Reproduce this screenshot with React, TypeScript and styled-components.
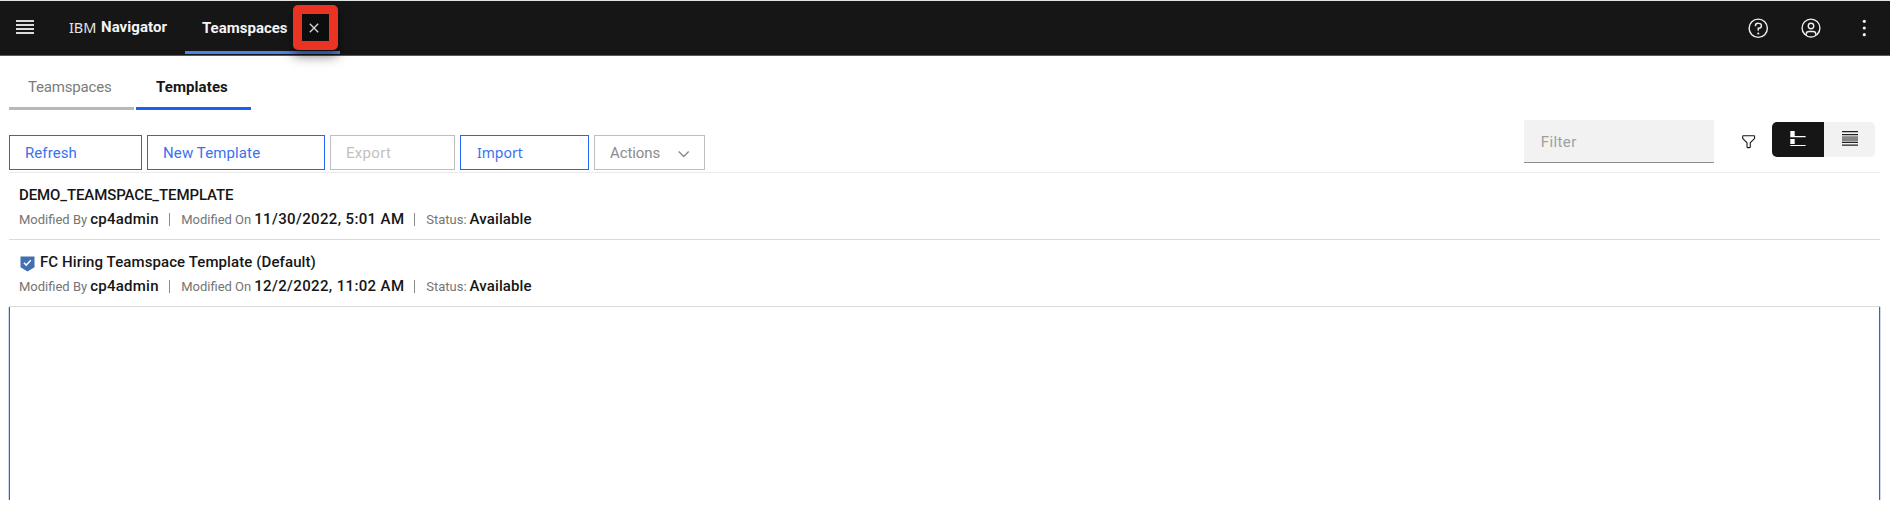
import React from 'react';
import styled, { createGlobalStyle } from 'styled-components';

const GlobalStyle = createGlobalStyle`
  *, *::before, *::after { box-sizing: border-box; }
  body { margin: 0; background: #fff; color: #161616; font: 400 15px/20px Roboto, sans-serif; }
  button { margin: 0; padding: 0; border: 0; background: none; font: inherit; color: inherit; text-align: left; }
  svg { display: block; }
`;

const Page = styled.div`
  display: flex;
  flex-direction: column;
  height: 506px;
  overflow: hidden;
`;

const Header = styled.header`
  display: flex;
  align-items: stretch;
  height: 56px;
  background: #161616;
  border-top: 1px solid #dfe5e3;
  border-bottom: 1px solid #5a5a5a;
  color: #f4f4f4;
`;

const MenuButton = styled.button`
  display: flex;
  align-items: flex-start;
  padding: 19px 0 0 16px;
  width: 69px;
`;

const Brand = styled.div`
  display: flex;
  width: 116px;
  padding-top: 16px;
`;

const BrandPrefix = styled.span`
  width: 32px;
  font-family: 'Noto Sans', sans-serif;
  font-size: 14.5px;
  letter-spacing: -0.1px;
  color: #e4e4e4;
`;

const BrandName = styled.span`
  font-weight: 700;
  letter-spacing: 0.05px;
`;

const HeaderTab = styled.div`
  display: flex;
  width: 155px;
  padding: 17px 0 0 17px;
  font-weight: 700;
  background: linear-gradient(#4f83ea, #4f83ea) 0 50px / 100% 3px no-repeat;
`;

const CloseFrame = styled.button`
  position: relative;
  z-index: 1;
  display: flex;
  align-items: center;
  justify-content: center;
  width: 45px;
  height: 45px;
  margin: -13px 0 0 5px;
  padding-right: 2px;
  border: 9px solid #ea3323;
  border-radius: 5px;
  background: #0d0d0d;
  box-shadow: 0 6px 12px rgba(0, 0, 0, 0.5);
  flex: none;
`;

const HeaderActions = styled.div`
  display: flex;
  align-items: center;
  gap: 31px;
  margin-left: auto;
  padding-right: 15px;
`;

const Tabs = styled.nav`
  display: flex;
  gap: 2px;
  height: 54px;
  padding: 0 9px;
`;

const Tab = styled.button<{ $selected?: boolean; $width: number }>`
  display: flex;
  width: ${p => p.$width}px;
  padding: 21px 0 0 ${p => (p.$selected ? 20 : 19)}px;
  border-bottom: 3px solid ${p => (p.$selected ? '#1c5fef' : '#b8b8b8')};
  color: ${p => (p.$selected ? '#161616' : '#7b7b7b')};
  font-weight: ${p => (p.$selected ? 700 : 400)};
  letter-spacing: ${p => (p.$selected ? 0.1 : -0.18)}px;
`;

const Toolbar = styled.div`
  display: flex;
  justify-content: space-between;
  height: 63px;
  margin: 0 10px 0 9px;
  border-bottom: 1px solid #ebebeb;
`;

const ButtonGroup = styled.div`
  display: flex;
  gap: 5px;
  padding-top: 25px;
`;

const OutlineButton = styled.button<{ $width: number; $tone?: 'primary' | 'disabled' | 'muted'; $spacing?: number }>`
  display: flex;
  justify-content: space-between;
  width: ${p => p.$width}px;
  height: 35px;
  padding: 7px 13px 0 15px;
  border: 1px solid ${p => (p.$tone === 'disabled' || p.$tone === 'muted' ? '#bebebe' : '#2466f2')};
  color: ${p => (p.$tone === 'disabled' ? '#c1c1c1' : p.$tone === 'muted' ? '#8b8b8b' : '#3a70f2')};
  letter-spacing: ${p => p.$spacing ?? 0}px;
`;

const ImportButton = styled(OutlineButton)`
  padding-left: 16px;
  font-family: 'Noto Sans', sans-serif;
  font-size: 14px;
`;

const ViewTools = styled.div`
  display: flex;
  align-items: flex-start;
  padding-right: 5px;
`;

const FilterInput = styled.div`
  width: 190px;
  height: 43px;
  margin-top: 10px;
  padding: 12px 0 0 17px;
  background: #f2f2f2;
  border-bottom: 1px solid #8d8d8d;
  color: #a0a0a0;
  letter-spacing: 0.4px;
`;

const FilterButton = styled.button`
  margin: 23px 15px 0 26px;
`;

const ViewToggle = styled.button<{ $active?: boolean }>`
  display: flex;
  justify-content: center;
  width: ${p => (p.$active ? 52 : 51)}px;
  height: 35px;
  margin-top: 12px;
  padding-top: 9px;
  background: ${p => (p.$active ? '#161616' : '#f2f2f2')};
  border-radius: ${p => (p.$active ? '5px 0 0 5px' : '0 5px 5px 0')};
`;

const List = styled.ul`
  margin: 0 10px 0 9px;
  padding: 0;
  list-style: none;
`;

const Item = styled.li`
  height: 67px;
  padding: 12px 0 0 10px;
  border-bottom: 1px solid #dadada;
`;

const Title = styled.div<{ $spacing: number }>`
  display: flex;
  gap: 5px;
  font-weight: 500;
  letter-spacing: ${p => p.$spacing}px;
`;

const Meta = styled.div`
  display: flex;
  align-items: baseline;
  padding-top: 4px;
  white-space: nowrap;
`;

const Label = styled.span`
  margin-right: 3px;
  font-size: 13px;
  color: #757575;
`;

const Value = styled.span<{ $width: number; $spacing: number }>`
  width: ${p => p.$width}px;
  font-weight: 500;
  letter-spacing: ${p => p.$spacing}px;
`;

const Separator = styled.span`
  align-self: center;
  width: 1px;
  height: 13px;
  margin: 0 11px 0 10px;
  background: #8d8d8d;
`;

const EmptyArea = styled.div`
  height: 193px;
  margin: 0 9px 0 8px;
  border: solid #cbdaf1;
  border-width: 0 1px;
  box-shadow: inset 1px 0 #3567b8, inset -1px 0 #3567b8;
`;

const MenuIcon = () => (
  <svg width="18" height="15" viewBox="0 0 18 15" fill="#dcdcdc">
    <path d="M0 0h18v2H0zM0 4h18v2H0zM0 8h18v2H0zM0 12h18v2H0z" />
  </svg>
);

const CloseIcon = () => (
  <svg width="10" height="10" viewBox="0 0 10 10" stroke="#d8d8d8" strokeWidth="1.3">
    <path d="M.8.8l8.4 8.4M9.2.8L.8 9.2" />
  </svg>
);

const HelpIcon = () => (
  <svg width="22.5" height="22.5" viewBox="0 0 32 32" fill="#f0f0f0">
    <path d="M16 2a14 14 0 1 0 14 14A14 14 0 0 0 16 2zm0 26a12 12 0 1 1 12-12 12 12 0 0 1-12 12z" />
    <circle cx="16" cy="23.5" r="1.5" />
    <path d="M17 8h-1.5a4.49 4.49 0 0 0-4.5 4.5v.5h2v-.5a2.5 2.5 0 0 1 2.5-2.5H17a2.5 2.5 0 0 1 0 5h-2v4.5h2V17a4.5 4.5 0 0 0 0-9z" />
  </svg>
);

const UserIcon = () => (
  <svg width="22" height="22" viewBox="0 0 32 32" fill="#f0f0f0">
    <path d="M16 8a5 5 0 1 0 5 5 5 5 0 0 0-5-5zm0 8a3 3 0 1 1 3-3 3 3 0 0 1-3 3z" />
    <path d="M16 2a14 14 0 1 0 14 14A14 14 0 0 0 16 2zm-6 24.38V25a3 3 0 0 1 3-3h6a3 3 0 0 1 3 3v1.38a11.9 11.9 0 0 1-12 0zm13.99-1.45A5 5 0 0 0 19 20h-6a5 5 0 0 0-4.99 4.93 12 12 0 1 1 15.98 0z" />
  </svg>
);

const OverflowIcon = () => (
  <svg width="22" height="22" viewBox="0 0 22 22" fill="#f0f0f0">
    <circle cx="11.3" cy="4.3" r="1.6" />
    <circle cx="11.3" cy="11" r="1.6" />
    <circle cx="11.3" cy="17.7" r="1.6" />
  </svg>
);

const FilterIcon = () => (
  <svg width="17.3" height="17.3" viewBox="0 0 32 32" fill="#161616">
    <path d="M18 28h-4a2 2 0 0 1-2-2v-7.59L4.59 11A2 2 0 0 1 4 9.59V6a2 2 0 0 1 2-2h20a2 2 0 0 1 2 2v3.59a2 2 0 0 1-.59 1.41L20 18.41V26a2 2 0 0 1-2 2zM6 6v3.59l8 8V26h4v-8.41l8-8V6z" />
  </svg>
);

const DetailViewIcon = () => (
  <svg width="16" height="15" viewBox="0 0 16 15" fill="#fff">
    <path d="M.3 0h4.4v5h10.9v1.3H.3zM.3 8h4.4v5H.3zM.3 14h15.3v1H.3z" />
  </svg>
);

const ListViewIcon = () => (
  <svg width="16" height="15" viewBox="0 0 16 15" fill="#222">
    <path d="M0 0h16v1.2H0zM0 3h16v1.2H0zM0 10.8h16V12H0zM0 13.6h16v1.2H0z" />
    <path d="M0 5.2h16v5H0z" fill="#858585" />
  </svg>
);

const ChevronIcon = () => (
  <svg width="14" height="20" viewBox="0 0 14 20" fill="none" stroke="#8b8b8b" strokeWidth="1.4">
    <path d="M1.7 8.6l5 5 5-5" />
  </svg>
);

const DefaultBadge = () => (
  <svg width="16" height="20" viewBox="0 0 16 20">
    <path d="M1.5 4.5h14v10.7l-7 4.3-7-4.3z" fill="#426fb3" />
    <path d="M4.9 10.8l2.3 2.3 4.6-4.8" fill="none" stroke="#fff" strokeWidth="1.5" />
  </svg>
);

type Template = { title: string; spacing: number; modified: string; isDefault?: boolean };

const templates: Template[] = [
  { title: 'DEMO_TEAMSPACE_TEMPLATE', spacing: -0.1, modified: '11/30/2022, 5:01 AM' },
  { title: 'FC Hiring Teamspace Template (Default)', spacing: 0.1, modified: '12/2/2022, 11:02 AM', isDefault: true },
];

const TemplateItem = ({ title, spacing, modified, isDefault }: Template) => (
  <Item>
    <Title $spacing={spacing}>
      {isDefault && <DefaultBadge />}
      <span>{title}</span>
    </Title>
    <Meta>
      <Label>Modified By</Label>
      <Value $width={69} $spacing={0.25}>cp4admin</Value>
      <Separator />
      <Label>Modified On</Label>
      <Value $width={150} $spacing={0.36}>{modified}</Value>
      <Separator />
      <Label>Status:</Label>
      <Value $width={64} $spacing={0.13}>Available</Value>
    </Meta>
  </Item>
);

export default function App() {
  return (
    <Page>
      <GlobalStyle />
      <Header>
        <MenuButton aria-label="Menu"><MenuIcon /></MenuButton>
        <Brand>
          <BrandPrefix>IBM</BrandPrefix>
          <BrandName>Navigator</BrandName>
        </Brand>
        <HeaderTab>
          Teamspaces
          <CloseFrame aria-label="Close"><CloseIcon /></CloseFrame>
        </HeaderTab>
        <HeaderActions>
          <HelpIcon />
          <UserIcon />
          <OverflowIcon />
        </HeaderActions>
      </Header>
      <Tabs>
        <Tab $width={125}>Teamspaces</Tab>
        <Tab $width={115} $selected>Templates</Tab>
      </Tabs>
      <Toolbar>
        <ButtonGroup>
          <OutlineButton $width={133} $spacing={0.08}>Refresh</OutlineButton>
          <OutlineButton $width={178} $spacing={0.12}>New Template</OutlineButton>
          <OutlineButton $width={125} $spacing={0.3} $tone="disabled">Export</OutlineButton>
          <ImportButton $width={129}>Import</ImportButton>
          <OutlineButton $width={111} $spacing={-0.08} $tone="muted">
            Actions
            <ChevronIcon />
          </OutlineButton>
        </ButtonGroup>
        <ViewTools>
          <FilterInput>Filter</FilterInput>
          <FilterButton aria-label="Filter options"><FilterIcon /></FilterButton>
          <ViewToggle $active aria-label="Detail view"><DetailViewIcon /></ViewToggle>
          <ViewToggle aria-label="List view"><ListViewIcon /></ViewToggle>
        </ViewTools>
      </Toolbar>
      <List>
        {templates.map(t => <TemplateItem key={t.title} {...t} />)}
      </List>
      <EmptyArea />
    </Page>
  );
}
